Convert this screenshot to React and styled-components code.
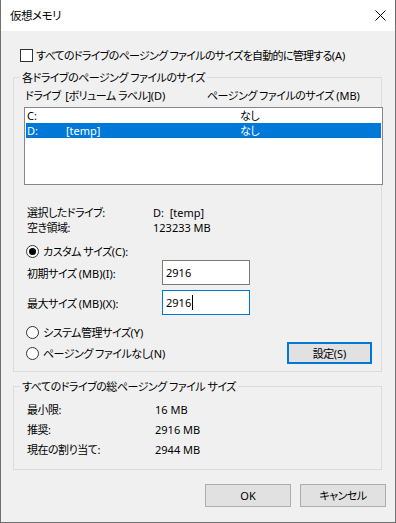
import React from "react";
import styled, { createGlobalStyle } from "styled-components";

const Global = createGlobalStyle`
  html, body { margin: 0; padding: 0; background: #ffffff; }
  body {
    font-family: "Noto Sans", "Noto Sans CJK JP", sans-serif;
    font-size: 11px;
    letter-spacing: -0.5px;
    color: #000;
    font-feature-settings: "palt" 1;
    white-space: nowrap;
  }
  * { box-sizing: border-box; }
`;

const Latin = styled.span`
  letter-spacing: 0;
`;

const Window = styled.div`
  width: 396px;
  height: 523px;
  display: flex;
  flex-direction: column;
  border: 1px solid #707070;
  border-top: none;
  background: #f0f0f0;
`;

const TitleBar = styled.div`
  height: 31px;
  flex: none;
  display: flex;
  align-items: center;
  background: #ffffff;
  padding-left: 9px;
`;

const Title = styled.span`
  line-height: 15px;
  font-size: 11.5px;
`;

const CloseButton = styled.div`
  margin-left: auto;
  width: 30px;
  height: 31px;
  display: flex;
  align-items: center;
  justify-content: center;
`;

const Body = styled.div`
  flex: 1;
  display: flex;
  flex-direction: column;
  padding: 0 9px 0 12px;
`;

const CheckRow = styled.label`
  display: flex;
  align-items: center;
  gap: 3px;
  height: 15px;
  line-height: 15px;
  margin: 17px 0 0 7px;
  letter-spacing: -0.7px;
`;

const CheckBox = styled.span`
  width: 13px;
  height: 13px;
  border: 1px solid #333333;
  background: #ffffff;
  flex: none;
`;

const Group = styled.div`
  position: relative;
  width: 369px;
  border: 1px solid #dcdcdc;
  margin-top: ${(p) => p.$mt}px;
  padding: ${(p) => p.$pad};
  display: flex;
  flex-direction: column;
`;

const Legend = styled.span`
  position: absolute;
  top: -8px;
  left: 6px;
  padding: 0 2px;
  line-height: 15px;
  background: #f0f0f0;
`;

const HeaderRow = styled.div`
  display: grid;
  grid-template-columns: 182px 1fr;
  height: 15px;
  line-height: 15px;
  padding-left: 11px;
`;

const ListBox = styled.div`
  width: 359px;
  height: 78px;
  margin: 4px 0 0 10px;
  border: 1px solid #828790;
  background: #ffffff;
  display: flex;
  flex-direction: column;
`;

const ListRow = styled.div`
  display: grid;
  grid-template-columns: 39px 174px 1fr;
  height: 15px;
  line-height: 15px;
  margin: 0 1px;
  padding-left: 1px;
  background: ${(p) => (p.$selected ? "#0078d7" : "transparent")};
  color: ${(p) => (p.$selected ? "#ffffff" : "#000000")};
`;

const InfoGrid = styled.div`
  display: grid;
  grid-template-columns: ${(p) => p.$col}px 1fr;
  grid-auto-rows: ${(p) => p.$row}px;
  align-items: center;
  line-height: 15px;
  margin-top: ${(p) => p.$mt}px;
  padding-left: 13px;
`;

const RadioRow = styled.label`
  display: flex;
  align-items: center;
  gap: 4px;
  height: 15px;
  line-height: 15px;
  margin: ${(p) => p.$mt || 0}px 0 0 12px;
`;

const RadioCircle = styled.span`
  width: 13px;
  height: 13px;
  border-radius: 50%;
  border: 1px solid #333333;
  background: #ffffff;
  flex: none;
  display: flex;
  align-items: center;
  justify-content: center;
  &::after {
    content: "";
    display: ${(p) => (p.$checked ? "block" : "none")};
    width: 7px;
    height: 7px;
    border-radius: 50%;
    background: #000000;
  }
`;

const FieldRow = styled.div`
  display: grid;
  grid-template-columns: 135px 88px;
  align-items: center;
  height: 25px;
  margin: ${(p) => p.$mt}px 0 0 13px;
`;

const TextBox = styled.div`
  height: 25px;
  border: 1px solid ${(p) => (p.$focused ? "#0078d7" : "#7a7a7a")};
  background: #ffffff;
  padding-left: 3px;
  display: flex;
  align-items: center;
  line-height: 15px;
  letter-spacing: 0;
`;

const Caret = styled.span`
  width: 1px;
  height: 15px;
  background: #000000;
  margin-left: 1px;
`;

const BottomRow = styled.div`
  display: flex;
  align-items: center;
  justify-content: space-between;
  margin-top: 2px;
  padding-right: 9px;
`;

const Button = styled.div`
  width: ${(p) => p.$w}px;
  height: ${(p) => p.$h}px;
  display: flex;
  align-items: center;
  justify-content: center;
  background: #e1e1e1;
  border: ${(p) => (p.$default ? "2px solid #0078d7" : "1px solid #adadad")};
  line-height: 15px;
`;

const ButtonBar = styled.div`
  display: flex;
  justify-content: flex-end;
  gap: 9px;
  margin-top: 14px;
`;

export default function App() {
  return (
    <>
      <Global />
      <Window>
        <TitleBar>
          <Title>仮想メモリ</Title>
          <CloseButton>
            <svg width="11" height="11" viewBox="0 0 11 11">
              <path d="M0.5 0.5 L10.5 10.5 M10.5 0.5 L0.5 10.5" stroke="#000" strokeWidth="1" />
            </svg>
          </CloseButton>
        </TitleBar>
        <Body>
          <CheckRow>
            <CheckBox />
            <span>
              すべてのドライブのページング ファイルのサイズを自動的に管理する<Latin>(A)</Latin>
            </span>
          </CheckRow>

          <Group $mt={14} $pad="10px 0 7px 0">
            <Legend>各ドライブのページング ファイルのサイズ</Legend>
            <HeaderRow>
              <span>
                ドライブ&nbsp;&nbsp;[ボリューム ラベル]<Latin>(D)</Latin>
              </span>
              <span>
                ページング ファイルのサイズ <Latin>(MB)</Latin>
              </span>
            </HeaderRow>
            <ListBox>
              <ListRow>
                <Latin>C:</Latin>
                <span></span>
                <span>なし</span>
              </ListRow>
              <ListRow $selected>
                <Latin>D:</Latin>
                <Latin>[temp]</Latin>
                <span>なし</span>
              </ListRow>
            </ListBox>

            <InfoGrid $col={126} $row={15} $mt={20}>
              <span>選択したドライブ:</span>
              <Latin>D:&nbsp;&nbsp;[temp]</Latin>
              <span>空き領域:</span>
              <Latin>123233 MB</Latin>
            </InfoGrid>

            <RadioRow $mt={9}>
              <RadioCircle $checked />
              <span>
                カスタム サイズ<Latin>(C):</Latin>
              </span>
            </RadioRow>
            <FieldRow $mt={1}>
              <span>
                初期サイズ <Latin>(MB)(I):</Latin>
              </span>
              <TextBox>2916</TextBox>
            </FieldRow>
            <FieldRow $mt={5}>
              <span>
                最大サイズ <Latin>(MB)(X):</Latin>
              </span>
              <TextBox $focused>
                2916
                <Caret />
              </TextBox>
            </FieldRow>
            <RadioRow $mt={10}>
              <RadioCircle />
              <span>
                システム管理サイズ<Latin>(Y)</Latin>
              </span>
            </RadioRow>
            <BottomRow>
              <RadioRow>
                <RadioCircle />
                <span>
                  ページング ファイルなし<Latin>(N)</Latin>
                </span>
              </RadioRow>
              <Button $w={85} $h={22} $default>
                <span>
                  設定<Latin>(S)</Latin>
                </span>
              </Button>
            </BottomRow>
          </Group>

          <Group $mt={14} $pad="12px 0 10px 0">
            <Legend>すべてのドライブの総ページング ファイル サイズ</Legend>
            <InfoGrid $col={128} $row={20} $mt={0}>
              <span>最小限:</span>
              <Latin>16 MB</Latin>
              <span>推奨:</span>
              <Latin>2916 MB</Latin>
              <span>現在の割り当て:</span>
              <Latin>2944 MB</Latin>
            </InfoGrid>
          </Group>

          <ButtonBar>
            <Button $w={86} $h={23}>
              <Latin>OK</Latin>
            </Button>
            <Button $w={86} $h={23}>キャンセル</Button>
          </ButtonBar>
        </Body>
      </Window>
    </>
  );
}
